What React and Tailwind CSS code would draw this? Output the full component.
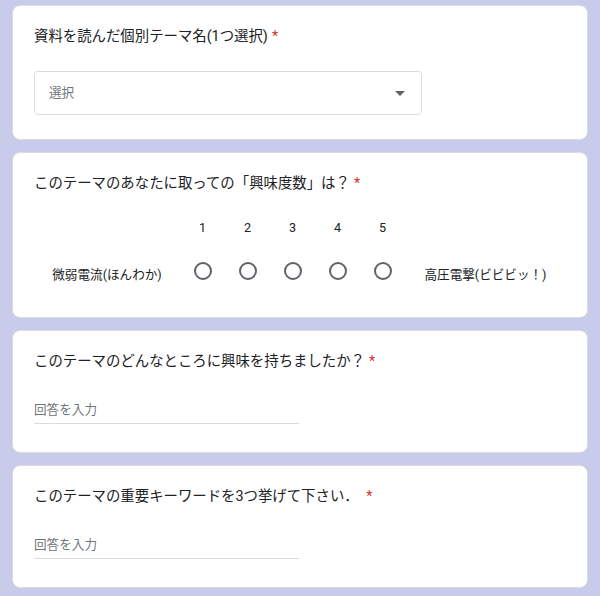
import React from 'react';

const font = { fontFamily: 'Roboto, "Noto Sans CJK JP", sans-serif' };

const Required = () => <span className="ml-1 text-[#d93025]">*</span>;

const Card = ({ children, className = '' }) => (
  <div className={`bg-white border border-[#dadce0] rounded-lg px-[21px] pt-[21px] ${className}`}>
    {children}
  </div>
);

const Title = ({ children }) => (
  <div className="text-[14.4px] leading-5 text-[#202124]">{children}</div>
);

const TextAnswer = () => (
  <div className="mt-7 w-[265px] border-b border-[#dadce0] pb-[3px] text-[12.6px] leading-5 text-[#70757a]">
    回答を入力
  </div>
);

const scale = [1, 2, 3, 4, 5];

export default function App() {
  return (
    <div className="min-h-[596px] bg-[#c8cbe9] px-3 pt-[5px] pb-3 flex flex-col gap-3" style={font}>
      <Card className="pb-[24px]">
        <Title>
          資料を読んだ個別テーマ名(1つ選択)<Required />
        </Title>
        <div className="mt-6 w-[388px] h-[44px] border border-[#dadce0] rounded flex items-center justify-between pl-[14px] pr-4">
          <span className="text-[12.6px] text-[#70757a]">選択</span>
          <svg width="10" height="5" viewBox="0 0 10 5">
            <path d="M0 0 L10 0 L5 5 Z" fill="#5f6368" />
          </svg>
        </div>
      </Card>

      <Card className="pb-[32px]">
        <Title>
          このテーマのあなたに取っての「興味度数」は？<Required />
        </Title>
        <div className="mt-6 flex">
          <div className="w-[146px]" />
          {scale.map(n => (
            <div key={n} className="w-[45px] text-center text-[12.6px] leading-5 text-[#202124]">{n}</div>
          ))}
        </div>
        <div className="mt-[24px] flex items-start">
          <div className="w-[146px] mt-[3px] text-center text-[12.6px] leading-5 text-[#202124]">微弱電流(ほんわか)</div>
          {scale.map(n => (
            <div key={n} className="w-[45px] flex justify-center">
              <div className="w-[18px] h-[18px] rounded-full border-2 border-[#5f6368]" />
            </div>
          ))}
          <div className="flex-1 mt-[3px] text-center text-[12.6px] leading-5 text-[#202124]">高圧電撃(ビビビッ！)</div>
        </div>
      </Card>

      <Card className="pb-7">
        <Title>
          このテーマのどんなところに興味を持ちましたか？<Required />
        </Title>
        <TextAnswer />
      </Card>

      <Card className="pb-7">
        <Title>
          このテーマの重要キーワードを3つ挙げて下さい． <Required />
        </Title>
        <TextAnswer />
      </Card>
    </div>
  );
}
